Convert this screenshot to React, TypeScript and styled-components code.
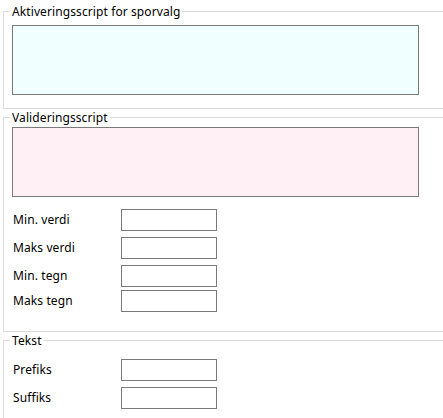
import React from "react";
import styled, { createGlobalStyle } from "styled-components";

const Global = createGlobalStyle`
  html, body { margin: 0; padding: 0; background: #ffffff; overflow: hidden; }
  body { font-family: "Noto Sans", "Segoe UI", sans-serif; font-size: 12px; color: #000; }
  * { box-sizing: border-box; }
`;

const Page = styled.div`
  display: flex;
  flex-direction: column;
  padding-top: 3px;
  width: 443px;
`;

const Group = styled.fieldset<{ $padBottom: number }>`
  margin: 0 0 0 3px;
  padding: 0 0 ${(p) => p.$padBottom}px 0;
  border: 1px solid #dcdcdc;
  border-right: none;
  min-width: 0;
  display: flex;
  flex-direction: column;
`;

const Legend = styled.legend`
  margin-left: 6px;
  padding: 0 2px;
  font-size: 12px;
  line-height: 17px;
  height: 17px;
  letter-spacing: 0.1px;
  color: #000;
`;

const Script = styled.textarea<{ $bg: string; $top: number }>`
  display: block;
  margin: ${(p) => p.$top}px 0 0 8px;
  width: 407px;
  height: 70px;
  border: 1px solid #7a7a7a;
  background: ${(p) => p.$bg};
  resize: none;
  padding: 2px;
  font: inherit;
  outline: none;
`;

const Row = styled.div<{ $top: number }>`
  display: flex;
  align-items: center;
  margin-top: ${(p) => p.$top}px;
  padding-left: 9px;
  height: 22px;
`;

const Label = styled.label`
  width: 108px;
  font-size: 12px;
  line-height: 16px;
  letter-spacing: 0.1px;
`;

const Field = styled.input`
  width: 96px;
  height: 22px;
  border: 1px solid #7a7a7a;
  background: #fff;
  padding: 0 3px;
  font: inherit;
  outline: none;
`;

export default function App() {
  return (
    <>
      <Global />
      <Page>
        <Group $padBottom={13}>
          <Legend>Aktiveringsscript for sporvalg</Legend>
          <Script $bg="#f0ffff" $top={5} />
        </Group>
        <Group $padBottom={19}>
          <Legend>Valideringsscript</Legend>
          <Script $bg="#fff0f5" $top={1} />
          <Row $top={12}>
            <Label>Min. verdi</Label>
            <Field />
          </Row>
          <Row $top={6}>
            <Label>Maks verdi</Label>
            <Field />
          </Row>
          <Row $top={6}>
            <Label>Min. tegn</Label>
            <Field />
          </Row>
          <Row $top={3}>
            <Label>Maks tegn</Label>
            <Field />
          </Row>
        </Group>
        <Group $padBottom={20}>
          <Legend>Tekst</Legend>
          <Row $top={10}>
            <Label>Prefiks</Label>
            <Field />
          </Row>
          <Row $top={6}>
            <Label>Suffiks</Label>
            <Field />
          </Row>
        </Group>
      </Page>
    </>
  );
}
